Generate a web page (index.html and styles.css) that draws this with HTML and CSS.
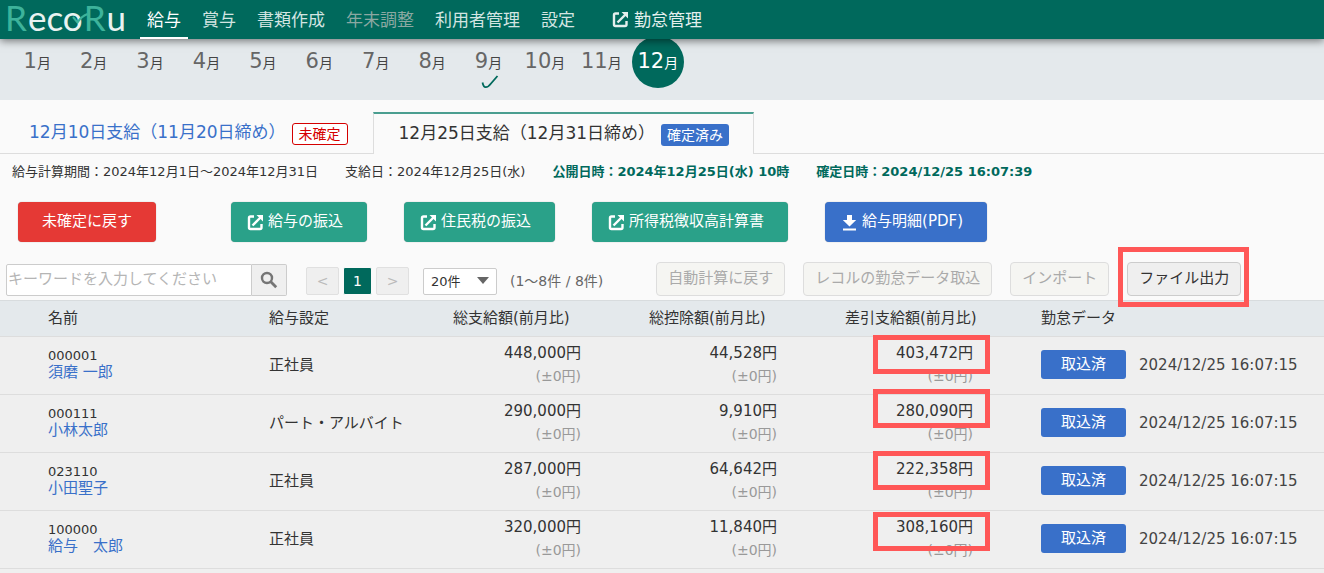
FILE: index.html
```html
<!DOCTYPE html>
<html lang="ja">
<head>
<meta charset="utf-8">
<title>RecoRu 給与</title>
<link rel="stylesheet" href="styles.css">
</head>
<body>
<svg class="defs" width="0" height="0" aria-hidden="true">
  <symbol id="ext" viewBox="0 0 17 17">
    <path d="M7 2.500H3.500Q2 2.500 2 4V13.500Q2 15 3.500 15H13Q14.500 15 14.500 13.500V10" fill="none" stroke="currentColor" stroke-width="2.400"/>
    <path d="M5.500 11.500L13.500 3.500" fill="none" stroke="currentColor" stroke-width="2.400"/>
    <path d="M9.500 1H16V7.500Z" fill="currentColor"/>
  </symbol>
  <symbol id="down" viewBox="0 0 17 17">
    <path d="M6 1H11V6H15.200L8.500 12.500 1.800 6H6ZM2 14.500H15V16.500H2Z" fill="currentColor"/>
  </symbol>
</svg>
<div class="page">
  <header class="topbar">
    <a class="logo" href="#"><span class="logo-r">R</span><span>eco</span><span class="logo-r">R</span><span>u</span>
      <svg class="logo-check" viewBox="0 0 18 14"><path d="M2 5L6.500 10.500Q10 4.500 16.500 2" fill="none" stroke="#3db39b" stroke-width="2"/></svg>
    </a>
    <nav class="nav">
      <a class="nav-item active" href="#">給与</a>
      <a class="nav-item" href="#">賞与</a>
      <a class="nav-item" href="#">書類作成</a>
      <a class="nav-item muted" href="#">年末調整</a>
      <a class="nav-item" href="#">利用者管理</a>
      <a class="nav-item" href="#">設定</a>
      <a class="nav-item external" href="#"><svg class="icon"><use href="#ext"/></svg>勤怠管理</a>
    </nav>
  </header>

  <nav class="months">
    <a class="month" href="#">1<small>月</small></a>
    <a class="month" href="#">2<small>月</small></a>
    <a class="month" href="#">3<small>月</small></a>
    <a class="month" href="#">4<small>月</small></a>
    <a class="month" href="#">5<small>月</small></a>
    <a class="month" href="#">6<small>月</small></a>
    <a class="month" href="#">7<small>月</small></a>
    <a class="month" href="#">8<small>月</small></a>
    <a class="month" href="#">9<small>月</small><svg class="month-check" viewBox="0 0 18 14"><path d="M1.500 7.500Q2.500 12 4.500 12.200Q7 12.500 10 8.500L16.500 1" fill="none" stroke="#00695c" stroke-width="1.800"/></svg></a>
    <a class="month" href="#">10<small>月</small></a>
    <a class="month" href="#">11<small>月</small></a>
    <a class="month current" href="#">12<small>月</small></a>
  </nav>

  <div class="tabs">
    <a class="tab" href="#">12月10日支給（11月20日締め）<span class="badge badge-open">未確定</span></a>
    <a class="tab selected" href="#">12月25日支給（12月31日締め）<span class="badge badge-fixed">確定済み</span></a>
  </div>

  <div class="info">
    <span>給与計算期間：2024年12月1日～2024年12月31日</span>
    <span>支給日：2024年12月25日(水)</span>
    <strong>公開日時：2024年12月25日(水) 10時</strong>
    <strong>確定日時：2024/12/25 16:07:39</strong>
  </div>

  <div class="actions">
    <button class="btn btn-red">未確定に戻す</button>
    <button class="btn btn-green"><svg class="icon"><use href="#ext"/></svg>給与の振込</button>
    <button class="btn btn-green"><svg class="icon"><use href="#ext"/></svg>住民税の振込</button>
    <button class="btn btn-green"><svg class="icon"><use href="#ext"/></svg>所得税徴収高計算書</button>
    <button class="btn btn-blue"><svg class="icon"><use href="#down"/></svg>給与明細(PDF)</button>
  </div>

  <div class="toolbar">
    <form class="search">
      <input class="search-input" type="text" aria-label="キーワード" placeholder="キーワードを入力してください">
      <button class="search-btn" type="button" aria-label="検索"><svg width="18" height="18" viewBox="0 0 18 18"><circle cx="7" cy="7" r="5" fill="none" stroke="#757575" stroke-width="2.400"/><path d="M10.800 10.800L16.200 16.200" stroke="#757575" stroke-width="2.800"/></svg></button>
    </form>
    <div class="pager">
      <button class="page-btn" disabled>&lt;</button>
      <button class="page-btn on">1</button>
      <button class="page-btn" disabled>&gt;</button>
    </div>
    <div class="per-page">
      <select class="select" aria-label="表示件数"><option>20件</option></select>
      <svg class="caret" viewBox="0 0 12 7"><path d="M0 0H12L6 7Z" fill="#666"/></svg>
    </div>
    <span class="count">(1～8件 / 8件)</span>
    <div class="tools">
      <button class="tool" disabled>自動計算に戻す</button>
      <button class="tool" disabled>レコルの勤怠データ取込</button>
      <button class="tool" disabled>インポート</button>
      <div class="marked"><button class="tool">ファイル出力</button><span class="mark mark-button"></span></div>
    </div>
  </div>

  <table class="table">
    <colgroup><col class="c-check"><col class="c-name"><col class="c-type"><col class="c-amount"><col class="c-amount"><col class="c-amount"><col></colgroup>
    <thead>
      <tr><th></th><th>名前</th><th>給与設定</th><th>総支給額(前月比)</th><th>総控除額(前月比)</th><th>差引支給額(前月比)</th><th>勤怠データ</th></tr>
    </thead>
    <tbody>
      <tr>
        <td></td>
        <td class="name"><span>000001</span><a href="#">須磨 一郎</a></td>
        <td>正社員</td>
        <td class="amount">448,000円<small>(±0円)</small></td>
        <td class="amount">44,528円<small>(±0円)</small></td>
        <td class="amount">403,472円<small>(±0円)</small><span class="mark mark-1"></span></td>
        <td><div class="import"><button class="import-btn">取込済</button>2024/12/25 16:07:15</div></td>
      </tr>
      <tr>
        <td></td>
        <td class="name"><span>000111</span><a href="#">小林太郎</a></td>
        <td>パート・アルバイト</td>
        <td class="amount">290,000円<small>(±0円)</small></td>
        <td class="amount">9,910円<small>(±0円)</small></td>
        <td class="amount">280,090円<small>(±0円)</small><span class="mark mark-2"></span></td>
        <td><div class="import"><button class="import-btn">取込済</button>2024/12/25 16:07:15</div></td>
      </tr>
      <tr>
        <td></td>
        <td class="name"><span>023110</span><a href="#">小田聖子</a></td>
        <td>正社員</td>
        <td class="amount">287,000円<small>(±0円)</small></td>
        <td class="amount">64,642円<small>(±0円)</small></td>
        <td class="amount">222,358円<small>(±0円)</small><span class="mark mark-3"></span></td>
        <td><div class="import"><button class="import-btn">取込済</button>2024/12/25 16:07:15</div></td>
      </tr>
      <tr>
        <td></td>
        <td class="name"><span>100000</span><a href="#">給与　太郎</a></td>
        <td>正社員</td>
        <td class="amount">320,000円<small>(±0円)</small></td>
        <td class="amount">11,840円<small>(±0円)</small></td>
        <td class="amount">308,160円<small>(±0円)</small><span class="mark mark-4"></span></td>
        <td><div class="import"><button class="import-btn">取込済</button>2024/12/25 16:07:15</div></td>
      </tr>
    </tbody>
  </table>
  <div class="rest"></div>
</div>
</body>
</html>
```

FILE: styles.css
```css
* { box-sizing: border-box; }

body {
  margin: 0;
  background: #fafafa;
  color: #333;
  font-family: "DejaVu Sans", "Noto Sans CJK JP", sans-serif;
  font-size: 15px;
  line-height: 20px;
}

a { color: inherit; text-decoration: none; }
button, input, select { font: inherit; color: inherit; margin: 0; }
.defs { position: absolute; }
.icon { width: 17px; height: 17px; flex: none; }
.page { display: flex; flex-direction: column; min-height: 100vh; }

/* header */
.topbar {
  display: flex;
  height: 39px;
  background: #00695c;
  box-shadow: 0 2px 8px rgba(0, 0, 0, .5);
  position: relative;
  z-index: 2;
  white-space: nowrap;
}
.logo {
  position: relative;
  display: flex;
  gap: 1px;
  width: 140px;
  padding-left: 5px;
  font-family: Lato, sans-serif;
  font-size: 35px;
  font-weight: 400;
  line-height: 34px;
  color: #e8f3f1;
}
.logo .logo-r { color: #3db39b; }
.logo-check { position: absolute; left: 71px; top: 12px; width: 18px; height: 14px; }
.nav { display: flex; gap: 7px; }
.nav-item {
  display: flex;
  align-items: center;
  padding: 2px 7px 0;
  border-bottom: 2px solid transparent;
  font-size: 17px;
  color: #d3e5e2;
}
.nav-item.active { color: #fff; border-color: #fff; }
.nav-item.muted { color: #8ba8a2; }
.nav-item.external { gap: 5px; margin-left: 16px; color: #e4efed; }

/* months */
.months {
  display: grid;
  grid-template-columns: repeat(12, 1fr);
  height: 61px;
  padding: 0 638px 0 9px;
  background: #e4e9ec;
}
.month {
  position: relative;
  z-index: 0;
  text-align: center;
  white-space: nowrap;
  font-size: 21px;
  line-height: 44px;
  color: #666;
}
.month small { font-size: 14px; color: #444; }
.month-check { position: absolute; left: 21px; top: 36px; width: 18px; height: 14px; }
.month.current, .month.current small { color: #fff; }
.month.current::before {
  content: "";
  position: absolute;
  z-index: -1;
  left: 50%;
  top: -3px;
  width: 52px;
  height: 52px;
  margin-left: -26px;
  border-radius: 50%;
  background: #00695c;
}

/* tabs */
.tabs {
  display: flex;
  padding-top: 12px;
  border-bottom: 1px solid #ddd;
}
.tab {
  display: flex;
  align-items: center;
  gap: 6px;
  height: 42px;
  margin-bottom: -1px;
  padding: 0 25px 2px 29px;
  font-size: 17px;
  color: #3970c9;
  white-space: nowrap;
}
.tab.selected {
  padding: 0 24px 2px 25px;
  border: solid #ddd;
  border-width: 2px 1px 0;
  border-top-color: #4a9e90;
  background: #fafafa;
  color: #333;
}
.badge {
  margin-top: 3px;
  padding: 0 6px;
  border-radius: 3px;
  font-size: 14px;
  line-height: 22px;
}
.badge-open { border: 1px solid #d50000; background: #fff; color: #d50000; line-height: 20px; }
.badge-fixed { background: #3970c9; color: #fff; }

.info {
  display: flex;
  gap: 27px;
  padding: 8px 12px 0;
  font-size: 13px;
  white-space: nowrap;
}
.info strong { color: #00695c; }

/* main actions */
.actions { display: flex; gap: 37px; padding: 20px 18px 0; }
.btn {
  display: flex;
  align-items: center;
  gap: 4px;
  height: 40px;
  padding: 0 24px 2px 16px;
  border: 0;
  border-radius: 4px;
  box-shadow: 0 0 1px rgba(0, 0, 0, .4);
  color: #fff;
  white-space: nowrap;
}
.btn .icon { margin-top: 2px; }
.btn-red { margin-right: 38px; padding-left: 24px; background: #e53935; }
.btn-green { background: #2aa189; }
.btn-blue { background: #3970c9; }

/* list toolbar */
.toolbar {
  display: flex;
  align-items: flex-start;
  padding: 20px 0 4px 6px;
  white-space: nowrap;
}
.search { display: flex; height: 32px; margin-top: 2px; }
.search-input {
  width: 246px;
  padding: 0 1px 2px;
  border: 1px solid #ccc;
  border-radius: 2px 0 0 2px;
  background: #fff;
}
.search-input::placeholder { color: #b5b5b5; }
.search-btn {
  display: flex;
  align-items: center;
  justify-content: center;
  width: 35px;
  padding: 0;
  border: 1px solid #ccc;
  border-left: 0;
  border-radius: 0 2px 2px 0;
  background: #efefef;
}
.pager { display: flex; gap: 4px; margin: 5px 14px 0 19px; }
.page-btn {
  width: 33px;
  height: 28px;
  padding: 0;
  border: 1px solid #e0e0e0;
  border-radius: 2px;
  background: #efefef;
  color: #bbb;
  font-size: 14px;
}
.page-btn.on { width: 29px; border-color: #fafafa; background: #00695c; color: #fff; }
.per-page { position: relative; margin-top: 6px; }
.select {
  appearance: none;
  width: 74px;
  height: 27px;
  padding: 0 7px;
  border: 1px solid #ccc;
  border-radius: 2px;
  background: #fff;
  font-size: 13px;
}
.caret { position: absolute; right: 8px; top: 9px; width: 12px; height: 7px; pointer-events: none; }
.count { margin: 9px 0 0 13px; font-size: 14px; color: #666; }
.tools { display: flex; gap: 18px; margin-left: 53px; }
.tool {
  height: 34px;
  padding: 0 11px 2px;
  border: 1px solid #ccc;
  border-radius: 4px;
  background: #efefef;
}
.tool:disabled { border-color: #ddd; background: #f5f5f2; color: #aaa; }
.marked { position: relative; }

/* highlight frames */
.mark {
  position: absolute;
  border: 5px solid #ff5757;
  pointer-events: none;
}
.mark-button { inset: -15px -8px -11px -9px; z-index: 1; }
.amount .mark { right: 44px; width: 117px; height: 39px; }
.amount .mark-1 { top: -2px; }
.amount .mark-2 { top: -6px; }
.amount .mark-3 { top: -2px; }
.amount .mark-4 { top: 1px; }

/* table */
.table {
  width: 100%;
  table-layout: fixed;
  border-collapse: separate;
  border-spacing: 0;
}
.c-check { width: 41px; }
.c-name { width: 221px; }
.c-type { width: 184px; }
.c-amount { width: 196px; }
th {
  height: 36px;
  padding: 0 7px 2px;
  border-top: 1px solid #d8dcde;
  background: #e4e9ec;
  font-weight: 400;
  text-align: left;
  white-space: nowrap;
}
td {
  position: relative;
  height: 58px;
  padding: 0 7px 2px;
  border-top: 1px solid #ddd;
  background: #efefef;
  white-space: nowrap;
}
.name { line-height: 17px; padding-bottom: 4px; }
.name span, .name a { display: block; }
.name span { font-size: 13px; }
.name a { color: #3970c9; }
.amount { padding-right: 61px; text-align: right; line-height: 23px; }
.amount small { display: block; font-size: 14px; color: #999; }
.import { display: flex; align-items: center; gap: 13px; color: #444; }
.import-btn {
  height: 29px;
  padding: 0 20px 1px;
  border: 0;
  border-radius: 3px;
  background: #3970c9;
  color: #fff;
}
.rest { flex: 1; border-top: 1px solid #ddd; background: #efefef; }
```
